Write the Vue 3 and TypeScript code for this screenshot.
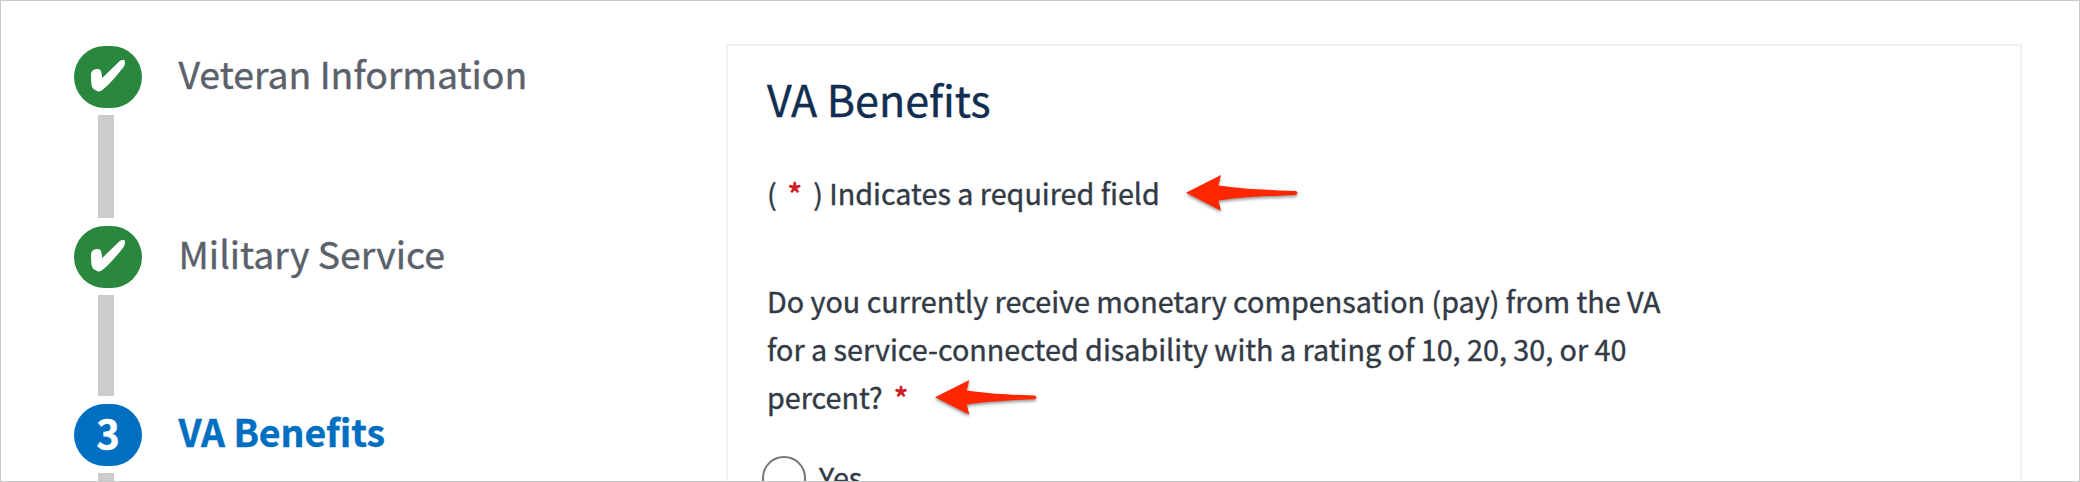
<script setup lang="ts">
type StepState = 'done' | 'current'

interface Step {
  id: number
  title: string
  state: StepState
}

const steps: Step[] = [
  { id: 1, title: 'Veteran Information', state: 'done' },
  { id: 2, title: 'Military Service', state: 'done' },
  { id: 3, title: 'VA Benefits', state: 'current' },
]
</script>

<template>
  <div class="frame">
    <ol class="steps">
      <li v-for="step in steps" :key="step.id" class="step" :class="step.state">
        <div class="track">
          <span class="marker">
            <svg v-if="step.state === 'done'" class="check" viewBox="0 0 68 62" aria-hidden="true">
              <path d="M17 29 C17 25.5 19.5 23.2 22.5 23 C25.6 22.8 27 23.8 27.3 26 L28.2 32 L45.5 15.2 C47 13.8 49 13.7 50.6 14.2 C51.3 16.5 51 19 49.6 21 C43 29.5 37 36.5 29.3 43.3 C27.5 44.9 25.5 46 23.8 45.2 C20.5 44.3 18.2 42.5 17.6 39.5 C17.1 36 17 32.5 17 29 Z" />
            </svg>
            <span v-else class="number">{{ step.id }}</span>
          </span>
          <span class="line"></span>
        </div>
        <span class="title">{{ step.title }}</span>
      </li>
    </ol>

    <section class="panel">
      <h2>VA Benefits</h2>
      <div class="row legend">
        <p><span class="paren">(</span><span class="star">*</span><span class="paren">)</span> Indicates a required field</p>
        <svg class="arrow first" width="118" height="44" viewBox="0 0 118 44" aria-hidden="true">
          <path d="M3 20.7 L38 3 L35.4 13.6 C61 17.3 85 18 113 19 Q116 20.9 113 22.9 C85 24 61 24.8 35.4 28.4 L38 38.7 Z" />
        </svg>
      </div>
      <div class="question">
        <p>
          Do you currently receive monetary compensation (pay) from the VA<br />
          for a service-connected disability with a rating of 10, 20, 30, or 40<br />
          percent?<span class="star after">*</span>
        </p>
        <svg class="arrow second" width="108" height="44" viewBox="0 0 108 44" aria-hidden="true">
          <path d="M3 20.3 L37.3 3 L34.8 13.4 C58 16.8 78 17.6 103 18.5 Q106 20.3 103 22.2 C78 23.3 58 24 34.8 27.5 L37.3 37.8 Z" />
        </svg>
      </div>
      <label class="option"><span class="radio"></span><span>Yes</span></label>
    </section>
  </div>
</template>

<style>
body {
  margin: 0;
  background: #fff;
}
</style>

<style scoped>
.frame {
  box-sizing: border-box;
  width: 2080px;
  height: 482px;
  overflow: hidden;
  display: flex;
  align-items: flex-start;
  border: 1px solid #c9c9c9;
  background: #fff;
  color: #323a45;
  font-family: "Noto Sans CJK JP", "Noto Sans", sans-serif;
  font-size: 28.73px;
  line-height: 48px;
  -webkit-text-stroke: 0.4px currentColor;
}

.steps {
  box-sizing: border-box;
  width: 725px;
  margin: 0;
  padding: 45px 0 0 73px;
  list-style: none;
}

.step {
  display: flex;
  height: 180px;
  color: #5b616b;
}

.step:nth-child(2) {
  height: 178px;
}

.track {
  display: flex;
  flex-direction: column;
  width: 68px;
  margin-right: 36.5px;
}

.marker {
  display: flex;
  align-items: center;
  justify-content: center;
  flex: none;
  height: 62px;
  border-radius: 31px;
  background: #29883e;
}

.check {
  width: 68px;
  height: 62px;
  fill: #fff;
}

.number {
  padding-bottom: 6px;
  color: #fff;
  font-size: 40px;
  font-weight: 700;
  line-height: 56px;
}

.current .marker {
  background: #006fc1;
}

.line {
  flex: 1;
  width: 16px;
  margin: 7px 0 8px 24px;
  background: #ccc;
}

.title {
  font-size: 37.4px;
  line-height: 55px;
  white-space: nowrap;
}

.current .title {
  color: #006fc1;
  font-weight: 700;
}

.panel {
  box-sizing: border-box;
  width: 1296px;
  height: 560px;
  margin-top: 43px;
  padding: 22px 38px 0 39px;
  border: 2px solid #f1f1f1;
}

h2 {
  margin: 0;
  color: #112e51;
  font-size: 43px;
  font-weight: 400;
  line-height: 60px;
}

p {
  margin: 0;
  white-space: nowrap;
}

.legend {
  position: relative;
  margin-top: 41px;
}

.star {
  display: inline-block;
  width: 15px;
  margin: 0 11px 0 10.5px;
  color: #cd2026;
  font-weight: 700;
  text-align: center;
  -webkit-text-stroke: 0;
}

.star.after {
  margin: 0 0 0 11px;
}

.question {
  position: relative;
  margin-top: 60px;
}

.arrow {
  position: absolute;
  fill: #ff2600;
  filter: drop-shadow(0 2px 1.5px rgba(0, 0, 0, 0.4));
}

.first {
  left: 416px;
  top: 3px;
}

.second {
  left: 165px;
  top: 100px;
}

.option {
  display: flex;
  margin: 35px 0 0 -5px;
}

.radio {
  box-sizing: border-box;
  width: 44px;
  height: 44px;
  margin-right: 13px;
  border: 2px solid #757575;
  border-radius: 50%;
}

.option span:last-child {
  line-height: 42px;
}
</style>
